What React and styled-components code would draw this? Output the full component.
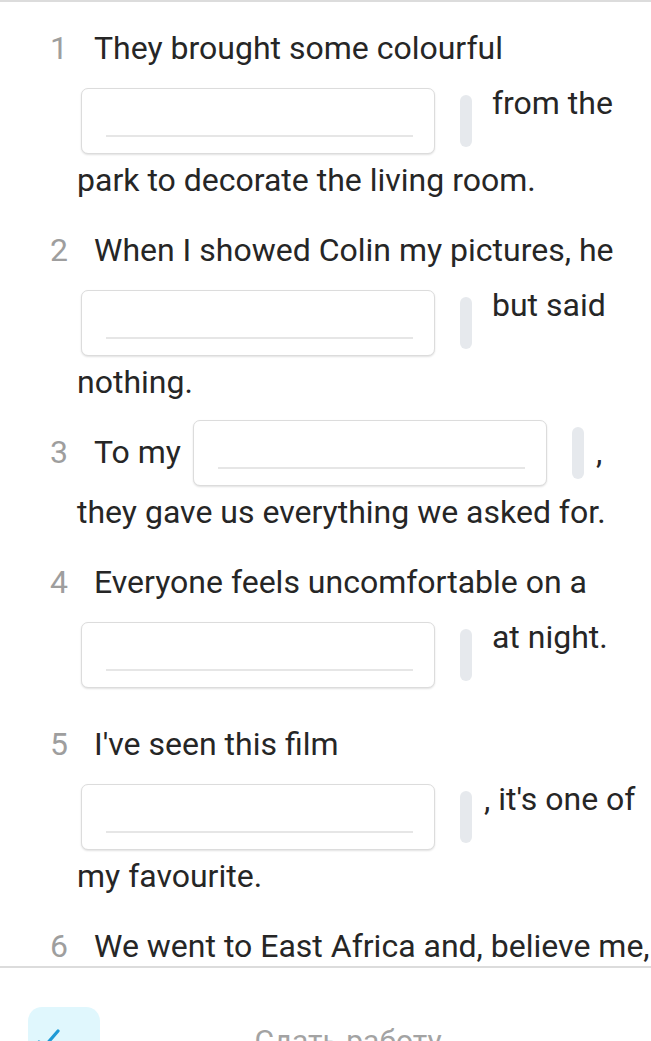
import React from "react";
import styled, { createGlobalStyle } from "styled-components";

const GlobalStyle = createGlobalStyle`
  html, body {
    margin: 0;
    padding: 0;
    background: #ffffff;
    overflow: hidden;
  }
  body {
    font-family: Roboto, "Noto Sans", "Liberation Sans", sans-serif;
    -webkit-font-smoothing: antialiased;
  }
`;

const Screen = styled.div`
  height: 1041px;
  display: flex;
  flex-direction: column;
  overflow: hidden;
  border-top: 2px solid #dcdcdc;
  box-sizing: border-box;
`;

const Exercise = styled.div`
  height: 964px;
  flex-shrink: 0;
  overflow: hidden;
  padding: 26px 0 0 50px;
  box-sizing: border-box;
  display: flex;
  flex-direction: column;
  gap: 30px;
  font-size: 32px;
  line-height: 40px;
  color: #262626;
`;

const Question = styled.div`
  display: flex;
  flex-direction: column;
  padding-left: 27px;
`;

const Line = styled.div`
  display: flex;
  align-items: flex-start;
  white-space: pre;
  margin-left: ${(p) => (p.$lead ? "-27px" : "0")};
  margin-top: ${(p) => (p.$gapRow ? "15px" : "0")};
`;

const Num = styled.span`
  width: 44px;
  flex-shrink: 0;
  color: #9e9e9e;
`;

const Words = styled.span`
  white-space: pre;
`;

const After = styled.span`
  margin-left: 12px;
  white-space: pre;
`;

const Box = styled.div`
  width: 354px;
  height: 66px;
  flex-shrink: 0;
  box-sizing: border-box;
  margin: ${(p) => p.$offset}px 0 6px 4px;
  padding: 0 21px 16px 24px;
  border: 1px solid #dcdcdc;
  border-radius: 7px;
  background: #ffffff;
  box-shadow: 0 1px 2px rgba(0, 0, 0, 0.12);
  display: flex;
  align-items: flex-end;
`;

const Underline = styled.div`
  flex: 1;
  height: 2px;
  background: #e6e6e6;
`;

const Pill = styled.div`
  width: 12px;
  height: 52px;
  flex-shrink: 0;
  margin: ${(p) => p.$offset + 7}px 0 0 25px;
  border-radius: 6px;
  background: #e6e9ed;
`;

const BottomBar = styled.div`
  flex: 1;
  border-top: 2px solid #dcdcdc;
  display: flex;
  align-items: flex-start;
  padding: 39px 55px 0 28px;
`;

const CheckButton = styled.div`
  width: 72px;
  height: 72px;
  flex-shrink: 0;
  border-radius: 14px;
  background: #e0f7fd;
  box-sizing: border-box;
  padding: 20px 0 0 6px;
`;

const SubmitLabel = styled.div`
  flex: 1;
  margin-top: 16px;
  text-align: center;
  font-size: 30px;
  line-height: 36px;
  color: #a3a3a3;
`;

const Gap = ({ offset }) => (
  <>
    <Box $offset={offset}>
      <Underline />
    </Box>
    <Pill $offset={offset} />
  </>
);

const questions = [
  {
    n: 1,
    lead: "They brought some colourful",
    after: " from the",
    tail: "park to decorate the living room.",
  },
  {
    n: 2,
    lead: "When I showed Colin my pictures, he",
    after: " but said",
    tail: "nothing.",
  },
  {
    n: 3,
    lead: "To my ",
    inline: true,
    after: ",",
    tail: "they gave us everything we asked for.",
  },
  {
    n: 4,
    lead: "Everyone feels uncomfortable on a",
    after: " at night.",
  },
  {
    n: 5,
    lead: "I've seen this film",
    after: ", it's one of",
    tail: "my favourite.",
  },
  {
    n: 6,
    lead: "We went to East Africa and, believe me,",
    noGap: true,
  },
];

export default function App() {
  return (
    <>
      <GlobalStyle />
      <Screen>
        <Exercise>
          {questions.map((q) => (
            <Question key={q.n}>
              <Line $lead>
                <Num>{q.n}</Num>
                <Words>{q.lead}</Words>
                {q.inline && (
                  <>
                    <Gap offset={-12} />
                    <After>{q.after}</After>
                  </>
                )}
              </Line>
              {!q.inline && !q.noGap && (
                <Line $gapRow>
                  <Gap offset={5} />
                  <After>{q.after}</After>
                </Line>
              )}
              {q.tail && (
                <Line>
                  <Words>{q.tail}</Words>
                </Line>
              )}
            </Question>
          ))}
        </Exercise>
        <BottomBar>
          <CheckButton>
            <svg width="36" height="36" viewBox="0 0 36 36" fill="none">
              <path
                d="M5 15 L11 19 L24 4"
                stroke="#1e9ad6"
                strokeWidth="3.2"
                strokeLinecap="round"
                strokeLinejoin="round"
              />
            </svg>
          </CheckButton>
          <SubmitLabel>Сдать работу</SubmitLabel>
        </BottomBar>
      </Screen>
    </>
  );
}
